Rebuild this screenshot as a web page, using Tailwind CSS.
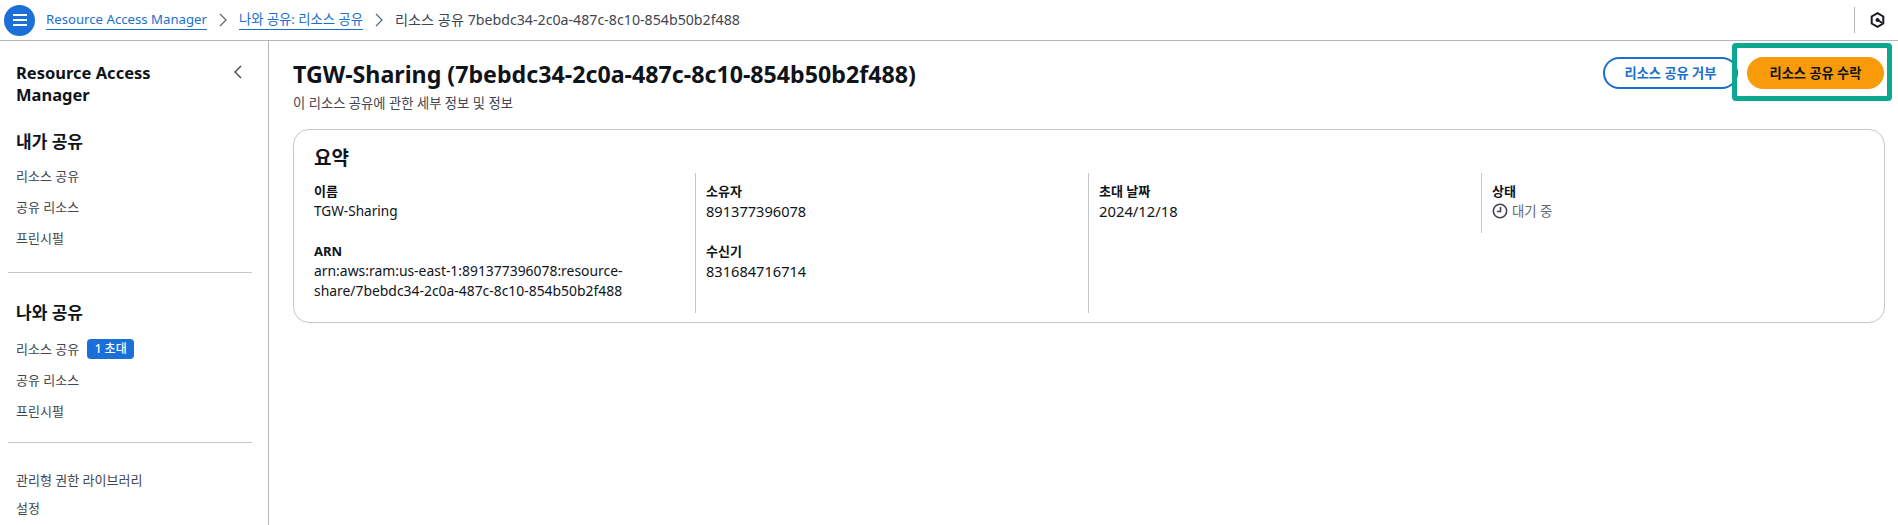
<!DOCTYPE html>
<html lang="ko">
<head>
<meta charset="utf-8">
<script src="https://cdn.jsdelivr.net/npm/@tailwindcss/browser@4"></script>
</head>
<body class="bg-white overflow-hidden font-['Noto_Sans','Noto_Sans_CJK_KR',sans-serif] text-[14px] leading-[20px] text-[#0f141a]">
<div class="relative h-[525px] w-[1898px] overflow-hidden">
  <header class="h-[41px] border-b border-[#b4b4bb] flex items-center pl-[4px] pr-[13px]">
    <button class="w-[31px] h-[31px] rounded-full bg-[#1a6fd8] flex items-center justify-center">
      <svg width="16" height="16" viewBox="0 0 16 16" fill="none" stroke="white" stroke-width="2"><path d="M1 3h14M1 8h14M1 13h14"/></svg>
    </button>
    <nav class="flex items-center ml-[11px]">
      <a class="text-[#1a6fd0] text-[13.2px] border-b border-[#1a6fd0] leading-[19px]">Resource Access Manager</a>
      <svg class="mx-[10px]" width="12" height="14" viewBox="0 0 12 14" fill="none" stroke="#5f6b7a" stroke-width="1.3"><path d="M3 1l6 6-6 6"/></svg>
      <a class="text-[#1a6fd0] text-[13.3px] border-b border-[#1a6fd0] leading-[19px]">나와 공유: 리소스 공유</a>
      <svg class="mx-[10px]" width="12" height="14" viewBox="0 0 12 14" fill="none" stroke="#5f6b7a" stroke-width="1.3"><path d="M3 1l6 6-6 6"/></svg>
      <span class="text-[#424650] text-[14.2px]">리소스 공유 7bebdc34-2c0a-487c-8c10-854b50b2f488</span>
    </nav>
    <div class="ml-auto flex items-center">
      <div class="w-px h-[26px] bg-[#b4b4bb] mr-[15px]"></div>
      <svg width="15" height="16" viewBox="0 0 15 16" fill="none" stroke="#16191f" stroke-width="2"><path d="M7.5 1.2l5.8 3.3v7l-5.8 3.3-5.8-3.3v-7z"/><circle cx="7.5" cy="8" r="2" fill="#16191f" stroke="none"/><path d="M8 8l4 3" stroke-width="1.6"/></svg>
    </div>
  </header>
  <div class="flex h-[484px]">
    <aside class="w-[269px] shrink-0 border-r border-[#b4b4bb] pl-[8px] pr-[16px]">
      <div class="flex justify-between pl-[8px] pt-[21px] pr-[8px]">
        <h2 class="text-[16.5px] leading-[22px] font-bold w-[170px] text-[#0f141a]">Resource Access Manager</h2>
        <svg class="mt-[3px]" width="12" height="14" viewBox="0 0 12 14" fill="none" stroke="#424650" stroke-width="1.4"><path d="M9 1L3 7l6 6"/></svg>
      </div>
      <h3 class="pl-[8px] mt-[24px] text-[17px] leading-[24px] font-bold">내가 공유</h3>
      <ul class="pl-[8px] mt-[12px] flex flex-col gap-[11px] text-[#424650] text-[13px]">
        <li>리소스 공유</li><li>공유 리소스</li><li>프린시펄</li>
      </ul>
      <div class="h-px bg-[#c6c6cd] mt-[24px]"></div>
      <h3 class="pl-[8px] mt-[28px] text-[17px] leading-[24px] font-bold">나와 공유</h3>
      <ul class="pl-[8px] mt-[14px] flex flex-col gap-[11px] text-[#424650] text-[13px]">
        <li class="flex items-center gap-[8px]">리소스 공유<span class="bg-[#1a6fd8] text-white text-[12px] leading-[20px] rounded-[4px] w-[47px] text-center font-medium">1 초대</span></li>
        <li>공유 리소스</li><li>프린시펄</li>
      </ul>
      <div class="h-px bg-[#c6c6cd] mt-[21px]"></div>
      <ul class="pl-[8px] mt-[27px] flex flex-col gap-[8px] text-[#424650] text-[13px]">
        <li>관리형 권한 라이브러리</li><li>설정</li>
      </ul>
    </aside>
    <main class="flex-1 pl-[24px] pr-[13px]">
      <div class="flex justify-between items-start pt-[16px]">
        <div>
          <h1 class="text-[23.2px] leading-[34px] font-bold">TGW-Sharing (7bebdc34-2c0a-487c-8c10-854b50b2f488)</h1>
          <p class="text-[#424650] text-[13.3px] leading-[20px] mt-[2px]">이 리소스 공유에 관한 세부 정보 및 정보</p>
        </div>
        <div class="flex gap-[9px] mr-[1px]">
          <button class="w-[135px] h-[32px] rounded-full border-2 border-[#1a6fd0] text-[#1a6fd0] font-bold text-[13.2px]">리소스 공유 거부</button>
          <button class="w-[137px] h-[32px] rounded-full bg-[#f89a09] text-[#0f141a] font-bold text-[13.2px]">리소스 공유 수락</button>
        </div>
      </div>
      <section class="mt-[16px] h-[194px] border border-[#c6c6cd] rounded-[16px] pl-[20px] pr-[20px] pt-[16px]">
        <h2 class="text-[19px] leading-[24px] font-bold">요약</h2>
        <div class="grid grid-cols-[381px_393px_393px_1fr] items-start mt-[3px]">
          <div class="h-[140px] flex flex-col gap-[20px] pt-[8px]">
            <div><div class="font-bold text-[13px]">이름</div><div class="text-[13.6px]">TGW-Sharing</div></div>
            <div><div class="font-bold text-[13px]">ARN</div><div class="text-[13.9px] w-[345px] break-words">arn:aws:ram:us-east-1:891377396078:resource-share/7bebdc34-2c0a-487c-8c10-854b50b2f488</div></div>
          </div>
          <div class="h-[140px] border-l border-[#c6c6cd] pl-[10px] flex flex-col gap-[20px] pt-[8px]">
            <div><div class="font-bold text-[13px]">소유자</div><div class="text-[14.6px]">891377396078</div></div>
            <div><div class="font-bold text-[13px]">수신기</div><div class="text-[14.6px]">831684716714</div></div>
          </div>
          <div class="h-[140px] border-l border-[#c6c6cd] pl-[10px] pt-[8px]">
            <div class="font-bold text-[13px]">초대 날짜</div><div class="text-[14.8px]">2024/12/18</div>
          </div>
          <div class="h-[60px] border-l border-[#c6c6cd] pl-[10px] pt-[8px]">
            <div class="font-bold text-[13px]">상태</div>
            <div class="flex items-center gap-[4px] text-[#656871] text-[13.4px]">
              <svg width="16" height="16" viewBox="0 0 16 16" fill="none" stroke="#424650" stroke-width="1.6"><circle cx="8" cy="8" r="6.7"/><path d="M8.5 4v4.5H5"/></svg>대기 중
            </div>
          </div>
        </div>
      </section>
    </main>
  </div>
  <div class="absolute left-[1732px] top-[43px] w-[160px] h-[58px] border-[5px] border-[#0aa88f] rounded-[4px]"></div>
</div>
</body>
</html>
